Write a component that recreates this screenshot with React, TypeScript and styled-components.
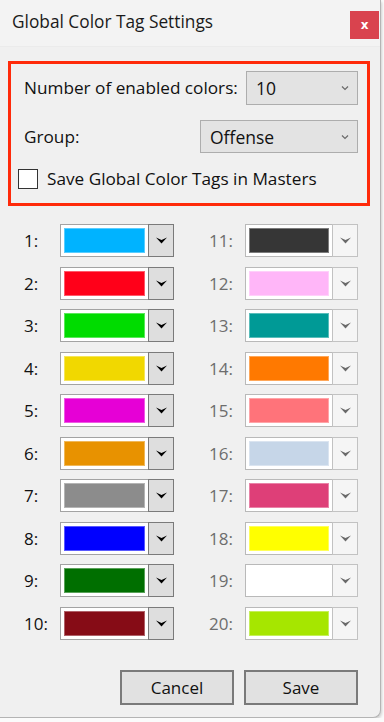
import React from "react";
import styled, { createGlobalStyle } from "styled-components";

const Global = createGlobalStyle`
  html, body { margin: 0; padding: 0; background: #fbfbfb; }
  body { font-family: "Open Sans", "Noto Sans", sans-serif; }
  * { box-sizing: border-box; }
`;

const Window = styled.div`
  width: 381px;
  height: 718px;
  background: #f0f0f0;
  border-right: 1px solid #b4b4b4;
  border-bottom: 1px solid #b4b4b4;
  border-bottom-right-radius: 8px;
  box-shadow: 1px 2px 3px rgba(0, 0, 0, 0.18);
  display: flex;
  flex-direction: column;
  overflow: hidden;
`;

const TitleBar = styled.div`
  height: 47px;
  background: #f3f3f3;
  border-bottom: 1px solid #ebebeb;
  display: flex;
  align-items: flex-start;
  justify-content: space-between;
  padding: 0 1px 0 12px;
`;

const Title = styled.div`
  font-size: 17.3px;
  color: #1a1a1a;
  line-height: 22px;
  margin-top: 11px;
`;

const Close = styled.div`
  width: 29px;
  height: 28px;
  margin-top: 11px;
  background: #d9434e;
  color: #fff;
  font-family: "DejaVu Sans", sans-serif;
  font-weight: bold;
  font-size: 12px;
  display: flex;
  align-items: center;
  justify-content: center;
`;

const Body = styled.div`
  flex: 1;
  display: flex;
  flex-direction: column;
  padding: 14px 0 0 8px;
`;

const Highlight = styled.div`
  width: 362px;
  height: 145px;
  border: 3px solid #ff2a0a;
  padding: 7px 9px 0 13px;
  display: flex;
  flex-direction: column;
`;

const FieldRow = styled.div<{ $mt?: number }>`
  display: flex;
  align-items: center;
  justify-content: space-between;
  margin-top: ${(p) => p.$mt ?? 0}px;
`;

const Label = styled.div`
  font-size: 17.2px;
  line-height: 22px;
  color: #111;
`;

const Select = styled.div<{ $w: number; $h: number }>`
  width: ${(p) => p.$w}px;
  height: ${(p) => p.$h}px;
  background: #e3e3e3;
  border: 1px solid #adadad;
  display: flex;
  align-items: center;
  justify-content: space-between;
  padding: 0 8px 0 9px;
  font-size: 17.5px;
  color: #111;
`;

const CheckRow = styled.div`
  display: flex;
  align-items: center;
  gap: 9px;
  margin: 15px 0 0 -6px;
`;

const Box = styled.div`
  width: 20px;
  height: 20px;
  background: #fff;
  border: 1px solid #333;
`;

const Grid = styled.div`
  display: grid;
  grid-template-columns: 150px 149px;
  grid-auto-rows: 42.56px;
  column-gap: 35px;
  margin: 18px 0 0 16px;
`;

const Cell = styled.div`
  display: flex;
  align-items: flex-start;
`;

const Num = styled.div<{ $disabled: boolean }>`
  width: 36px;
  height: 33px;
  display: flex;
  align-items: center;
  font-size: 17px;
  color: ${(p) => (p.$disabled ? "#6d6d6d" : "#111")};
`;

const Swatch = styled.div<{ $disabled: boolean }>`
  width: 88px;
  height: 33px;
  background: #fff;
  border: 1px solid ${(p) => (p.$disabled ? "#b9b9b9" : "#a3a3a3")};
  border-right: none;
  padding: 3px;
  display: flex;
`;

const Fill = styled.div<{ $c: string }>`
  flex: 1;
  background: ${(p) => p.$c};
  border: 1px solid ${(p) => (p.$c === "#ffffff" ? "#ffffff" : "rgba(255,255,255,0.35)")};
`;

const Drop = styled.div<{ $disabled: boolean }>`
  width: 26px;
  height: 33px;
  background: ${(p) => (p.$disabled ? "#f5f5f5" : "#dedede")};
  border: 1px solid ${(p) => (p.$disabled ? "#c2c2c2" : "#7a7a7a")};
  display: flex;
  align-items: center;
  justify-content: center;
  color: ${(p) => (p.$disabled ? "#6a6a6a" : "#000")};
`;

const Footer = styled.div`
  display: flex;
  justify-content: flex-end;
  gap: 10px;
  margin: 21px 0 0 0;
  padding-right: 22px;
`;

const Button = styled.div`
  width: 114px;
  height: 35px;
  background: #e1e1e1;
  border: 2px solid #7a7a7a;
  display: flex;
  align-items: center;
  justify-content: center;
  font-size: 17px;
  color: #111;
`;

const Chevron = () => (
  <svg width="8" height="6" viewBox="0 0 8 6">
    <path d="M1 1.5 L4 4.5 L7 1.5" fill="none" stroke="#6a6a6a" strokeWidth="1.2" />
  </svg>
);

const Arrow = () => (
  <svg width="11" height="7" viewBox="0 0 11 7">
    <polygon points="0,0.5 5.5,3 11,0.5 5.5,6.5" fill="currentColor" />
  </svg>
);

const left = ["#00b3ff", "#ff0019", "#00dc00", "#f1d800", "#e600d6", "#e89200", "#8c8c8c", "#0000ff", "#006f00", "#860c16"];
const right = ["#363636", "#ffb6f8", "#009a96", "#ff7900", "#ff737a", "#c6d6e8", "#de3f78", "#ffff00", "#ffffff", "#a6e600"];

const ColorCell = ({ n, c, disabled }: { n: number; c: string; disabled: boolean }) => (
  <Cell>
    <Num $disabled={disabled}>{n}:</Num>
    <Swatch $disabled={disabled}>
      <Fill $c={c} />
    </Swatch>
    <Drop $disabled={disabled}>
      <Arrow />
    </Drop>
  </Cell>
);

export default function App() {
  const cells: React.ReactNode[] = [];
  for (let i = 0; i < 10; i++) {
    cells.push(<ColorCell key={`l${i}`} n={i + 1} c={left[i]} disabled={false} />);
    cells.push(<ColorCell key={`r${i}`} n={i + 11} c={right[i]} disabled={true} />);
  }
  return (
    <>
      <Global />
      <Window>
        <TitleBar>
          <Title>Global Color Tag Settings</Title>
          <Close>x</Close>
        </TitleBar>
        <Body>
          <Highlight>
            <FieldRow>
              <Label>Number of enabled colors:</Label>
              <Select $w={112} $h={34}>
                <span>10</span>
                <Chevron />
              </Select>
            </FieldRow>
            <FieldRow $mt={15}>
              <Label>Group:</Label>
              <Select $w={158} $h={33}>
                <span>Offense</span>
                <Chevron />
              </Select>
            </FieldRow>
            <CheckRow>
              <Box />
              <Label>Save Global Color Tags in Masters</Label>
            </CheckRow>
          </Highlight>
          <Grid>{cells}</Grid>
          <Footer>
            <Button>Cancel</Button>
            <Button>Save</Button>
          </Footer>
        </Body>
      </Window>
    </>
  );
}
